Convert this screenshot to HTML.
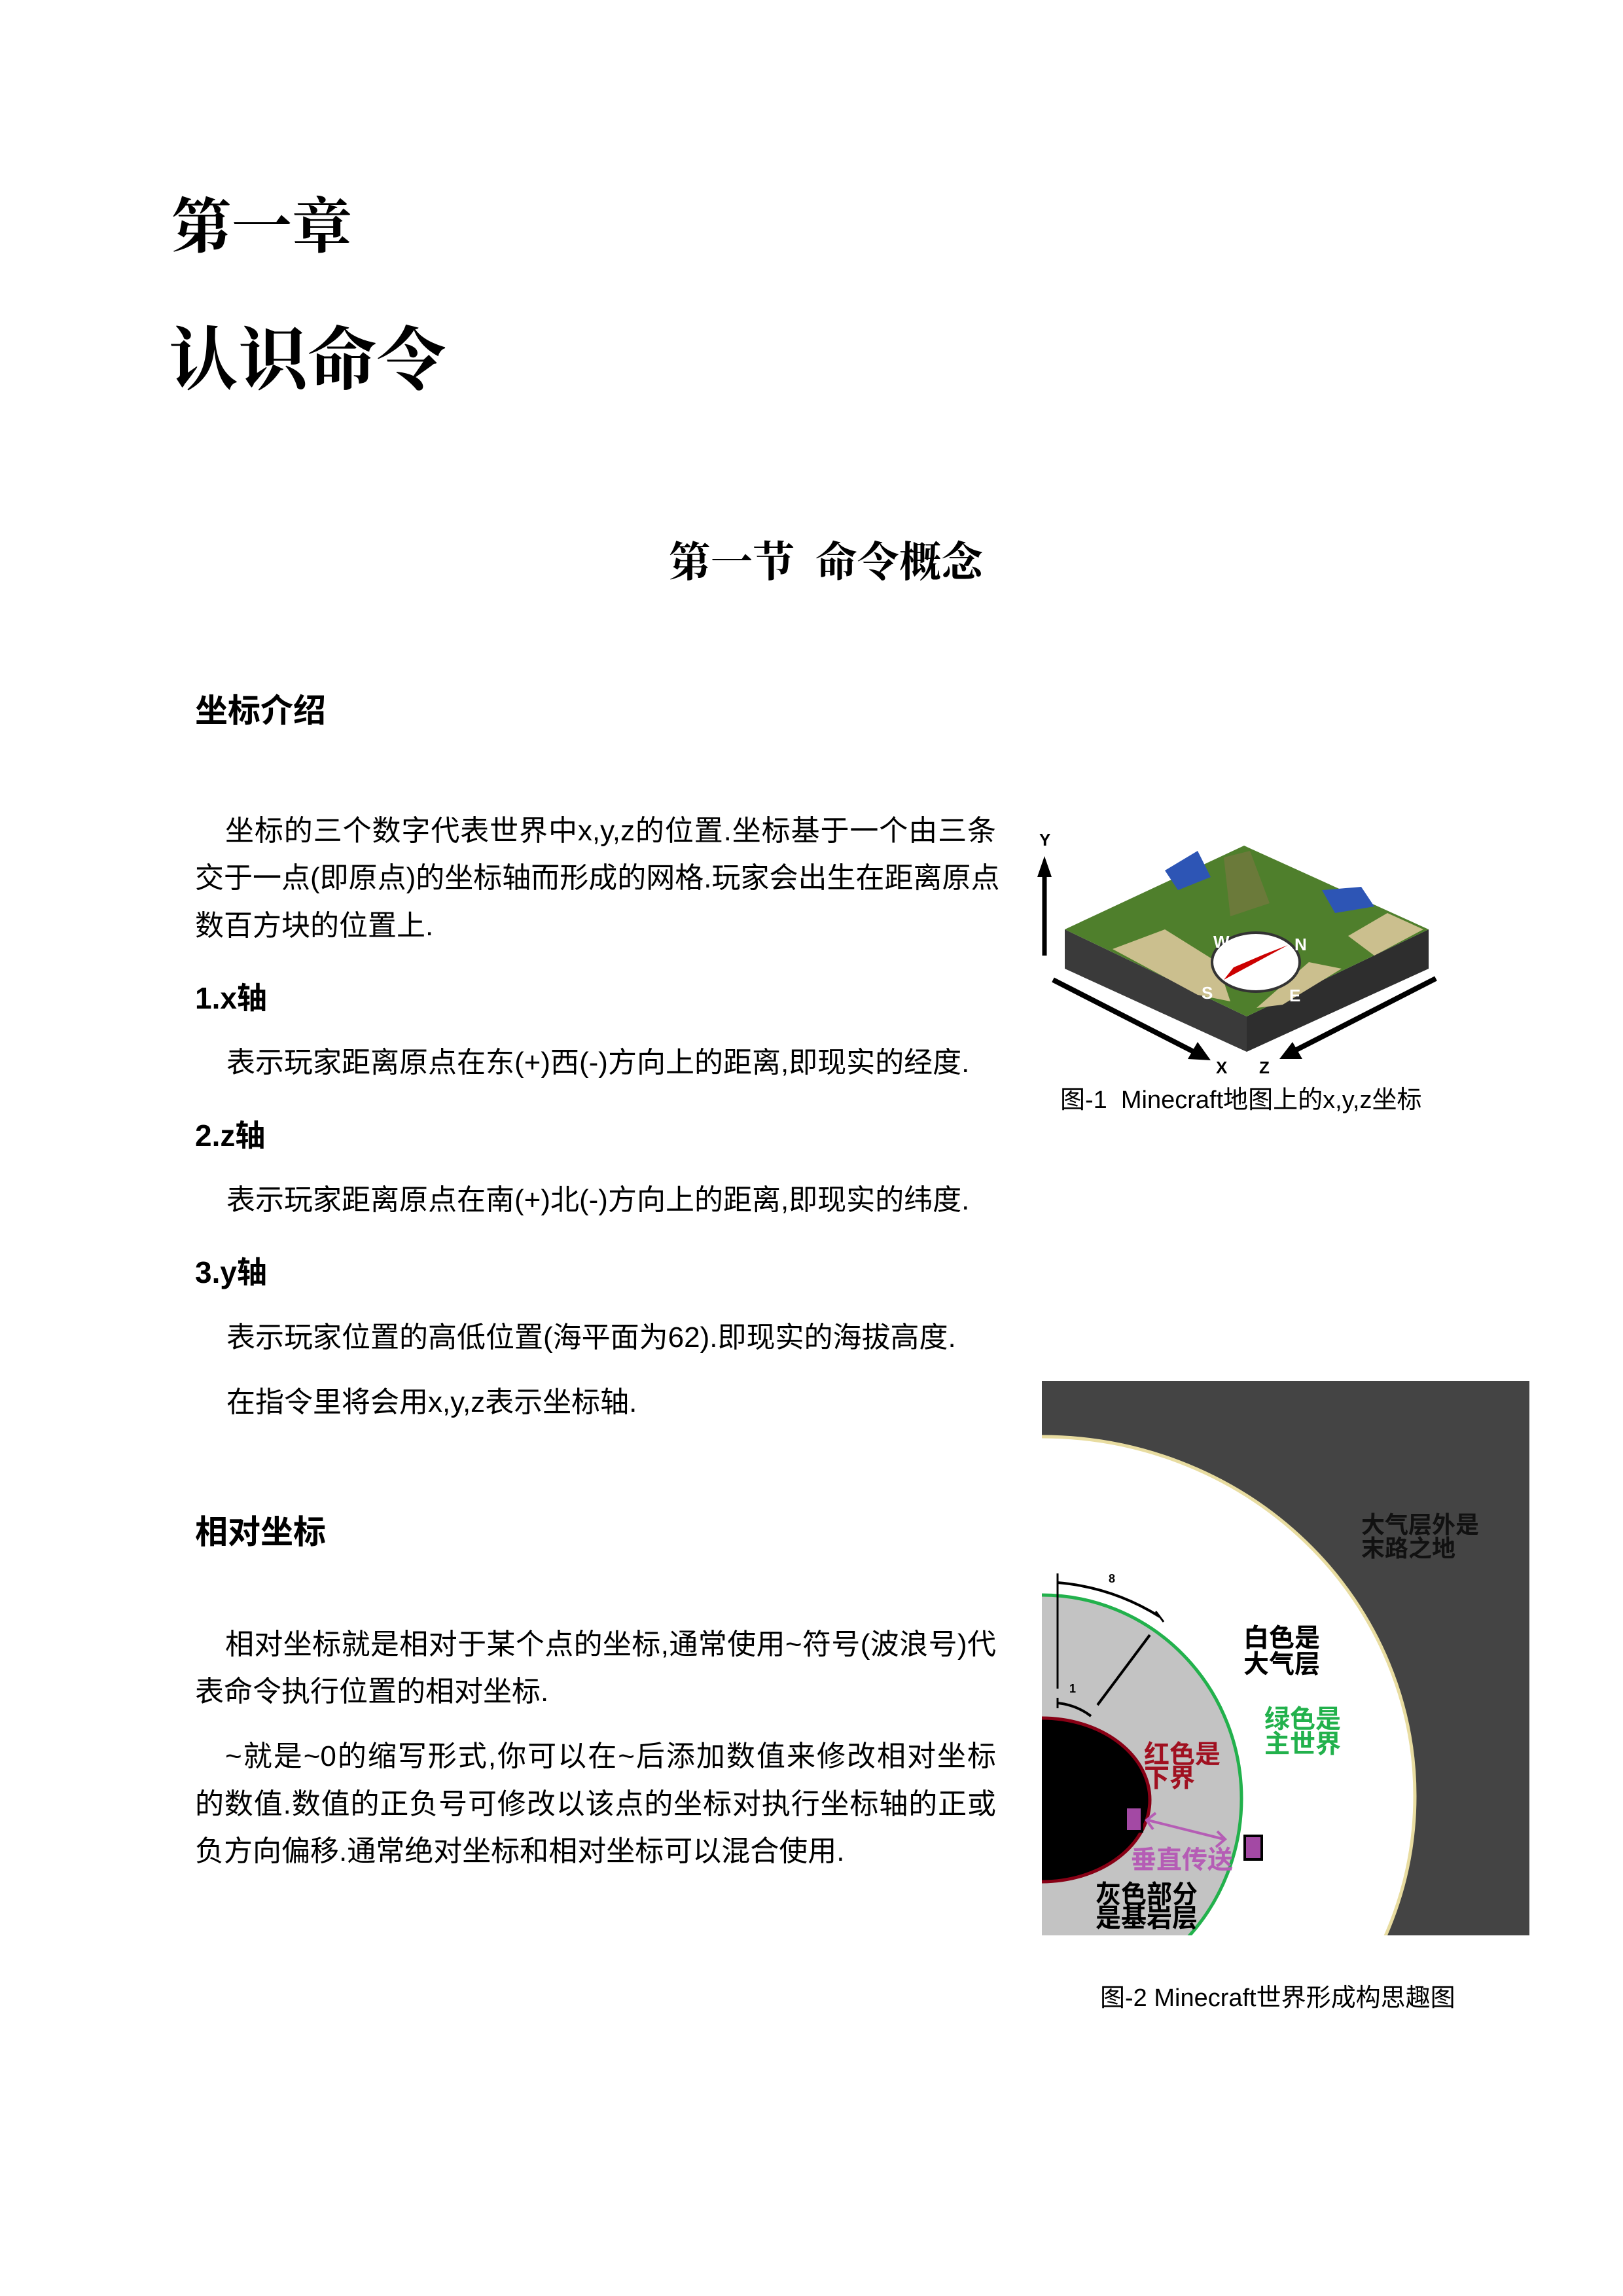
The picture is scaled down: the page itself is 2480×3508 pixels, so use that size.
<!DOCTYPE html>
<html><head><meta charset="utf-8"><style>
html,body{margin:0;padding:0;background:#fff}
body{width:2480px;height:3508px;position:relative;overflow:hidden}
.t{position:absolute;font-family:"Liberation Sans","Noto Sans CJK SC",sans-serif;color:#000;white-space:nowrap}
.k{font-family:"Liberation Serif","Noto Serif CJK SC",serif;font-weight:bold}
.p{font-size:44px;line-height:72px;height:72px}
.j{text-align:justify;text-align-last:justify;width:1224px}
.h{font-size:50px;font-weight:bold;line-height:72px}
</style></head><body>
<div class="t k" style="left:262px;top:292px;font-size:92px;line-height:110px">第一章</div>
<div class="t k" style="left:258px;top:490px;font-size:106px;line-height:124px">认识命令</div>
<div class="t k" style="left:1022px;top:820px;font-size:64px;line-height:80px">第一节&nbsp; 命令概念</div>

<div class="t h" style="left:298px;top:1050px">坐标介绍</div>
<div class="t p j" style="left:298px;top:1234px;text-indent:46px">坐标的三个数字代表世界中x,y,z的位置.坐标基于一个由三条</div>
<div class="t p j" style="left:298px;top:1306px">交于一点(即原点)的坐标轴而形成的网格.玩家会出生在距离原点</div>
<div class="t p" style="left:298px;top:1379px">数百方块的位置上.</div>
<div class="t h" style="left:298px;top:1489px;font-size:46px">1.x轴</div>
<div class="t p" style="left:346px;top:1588px">表示玩家距离原点在东(+)西(-)方向上的距离,即现实的经度.</div>
<div class="t h" style="left:298px;top:1699px;font-size:46px">2.z轴</div>
<div class="t p" style="left:346px;top:1798px">表示玩家距离原点在南(+)北(-)方向上的距离,即现实的纬度.</div>
<div class="t h" style="left:298px;top:1908px;font-size:46px">3.y轴</div>
<div class="t p" style="left:346px;top:2008px">表示玩家位置的高低位置(海平面为62).即现实的海拔高度.</div>
<div class="t p" style="left:346px;top:2107px">在指令里将会用x,y,z表示坐标轴.</div>

<div class="t h" style="left:298px;top:2305px">相对坐标</div>
<div class="t p j" style="left:298px;top:2477px;text-indent:46px">相对坐标就是相对于某个点的坐标,通常使用~符号(波浪号)代</div>
<div class="t p" style="left:298px;top:2549px">表命令执行位置的相对坐标.</div>
<div class="t p j" style="left:298px;top:2648px;text-indent:46px">~就是~0的缩写形式,你可以在~后添加数值来修改相对坐标</div>
<div class="t p j" style="left:298px;top:2721px">的数值.数值的正负号可修改以该点的坐标对执行坐标轴的正或</div>
<div class="t p" style="left:298px;top:2793px">负方向偏移.通常绝对坐标和相对坐标可以混合使用.</div>

<svg style="position:absolute;left:0;top:0" width="2480" height="3508">
<g>
<polygon points="1627,1420 1905,1553 1905,1607 1627,1480" fill="#3a3a3a"/>
<polygon points="1905,1553 2183,1420 2183,1480 1905,1607" fill="#2e2e2e"/>
<polygon points="1627,1420 1901,1292 2183,1420 1905,1553" fill="#4f7f2c"/>
<polygon points="1700,1450 1780,1420 1860,1470 1880,1530 1830,1520" fill="#cbbf8e"/>
<polygon points="1920,1540 2000,1470 2050,1480 1960,1535" fill="#cbbf8e"/>
<polygon points="2060,1430 2120,1395 2175,1420 2100,1460" fill="#cbbf8e"/>
<polygon points="1780,1330 1830,1300 1850,1340 1800,1360" fill="#2d55b5"/>
<polygon points="2020,1360 2080,1355 2100,1385 2040,1395" fill="#2d55b5"/>
<polygon points="1870,1310 1910,1300 1940,1380 1880,1400" fill="#6b7a3a"/>
<ellipse cx="1919" cy="1470" rx="67" ry="45" fill="#fff" stroke="#333" stroke-width="4"/>
<polygon points="1968,1444 1870,1497 1885,1478 1932,1458" fill="#c00"/>
<text x="1854" y="1448" font-size="26" font-weight="bold" fill="#fff" font-family="Liberation Sans">W</text>
<text x="1978" y="1452" font-size="26" font-weight="bold" fill="#fff" font-family="Liberation Sans">N</text>
<text x="1836" y="1526" font-size="26" font-weight="bold" fill="#fff" font-family="Liberation Sans">S</text>
<text x="1970" y="1530" font-size="26" font-weight="bold" fill="#fff" font-family="Liberation Sans">E</text>
<text x="1588" y="1292" font-size="26" font-weight="bold" font-family="Liberation Sans">Y</text>
<line x1="1596" y1="1320" x2="1596" y2="1460" stroke="#000" stroke-width="7"/>
<polygon points="1596,1308 1585,1340 1607,1340" fill="#000"/>
<line x1="1609" y1="1497" x2="1830" y2="1610" stroke="#000" stroke-width="8"/>
<polygon points="1850,1620 1815,1618 1830,1592" fill="#000"/>
<line x1="2194" y1="1495" x2="1975" y2="1607" stroke="#000" stroke-width="8"/>
<polygon points="1955,1618 1975,1592 1990,1618" fill="#000"/>
<text x="1858" y="1640" font-size="26" font-weight="bold" font-family="Liberation Sans">X</text>
<text x="1924" y="1640" font-size="26" font-weight="bold" font-family="Liberation Sans">Z</text>
</g>
<defs><clipPath id="c2"><rect x="1592" y="2110" width="745" height="847"/></clipPath></defs>
<g clip-path="url(#c2)">
<rect x="1592" y="2110" width="745" height="847" fill="#444"/>
<ellipse cx="1592" cy="2744" rx="570" ry="549" fill="#fff" stroke="#e8dca0" stroke-width="5"/>
<ellipse cx="1592" cy="2748" rx="305" ry="311" fill="#c3c3c3" stroke="#22b14c" stroke-width="5"/>
<ellipse cx="1592" cy="2750" rx="165" ry="125" fill="#000" stroke="#880015" stroke-width="5"/>
<line x1="1616" y1="2404" x2="1616" y2="2580" stroke="#000" stroke-width="3"/>
<path d="M1616 2418 Q1700 2425 1772 2470" fill="none" stroke="#000" stroke-width="4"/>
<line x1="1766" y1="2462" x2="1778" y2="2478" stroke="#000" stroke-width="3"/>
<line x1="1757" y1="2498" x2="1677" y2="2605" stroke="#000" stroke-width="4"/>
<line x1="1616" y1="2594" x2="1616" y2="2610" stroke="#000" stroke-width="3"/>
<path d="M1616 2602 Q1645 2605 1667 2622" fill="none" stroke="#000" stroke-width="4"/>
<text x="1694" y="2418" font-size="18" font-weight="bold" font-family="Liberation Sans">8</text>
<text x="1634" y="2586" font-size="18" font-weight="bold" font-family="Liberation Sans">1</text>
<rect x="1720" y="2761" width="25" height="37" fill="#a349a4" stroke="#000" stroke-width="4"/>
<rect x="1902" y="2805" width="26" height="36" fill="#a349a4" stroke="#000" stroke-width="4"/>
<line x1="1754" y1="2781" x2="1870" y2="2810" stroke="#b55db5" stroke-width="4"/>
<polyline points="1766,2770 1752,2781 1762,2795" fill="none" stroke="#b55db5" stroke-width="4"/>
<polyline points="1860,2798 1872,2810 1858,2822" fill="none" stroke="#b55db5" stroke-width="4"/>
<g font-family="Liberation Sans,Noto Sans CJK SC,sans-serif" font-weight="bold">
<text x="2080" y="2342" font-size="36" fill="#111">大气层外是</text>
<text x="2080" y="2378" font-size="36" fill="#111">末路之地</text>
<text x="1900" y="2516" font-size="39" fill="#000">白色是</text>
<text x="1900" y="2556" font-size="39" fill="#000">大气层</text>
<text x="1932" y="2640" font-size="39" fill="#22b14c">绿色是</text>
<text x="1932" y="2678" font-size="39" fill="#22b14c">主世界</text>
<text x="1748" y="2694" font-size="39" fill="#a01020">红色是</text>
<text x="1748" y="2730" font-size="39" fill="#a01020">下界</text>
<text x="1728" y="2855" font-size="39" fill="#b55db5">垂直传送</text>
<text x="1674" y="2908" font-size="39" fill="#000">灰色部分</text>
<text x="1674" y="2944" font-size="39" fill="#000">是基岩层</text>
</g>
</g>
</svg>
<div class="t" style="left:1620px;top:1656px;font-size:38px;line-height:50px">图-1&nbsp; Minecraft地图上的x,y,z坐标</div>
<div class="t" style="left:1681px;top:3028px;font-size:38px;line-height:50px">图-2 Minecraft世界形成构思趣图</div>
</body></html>
